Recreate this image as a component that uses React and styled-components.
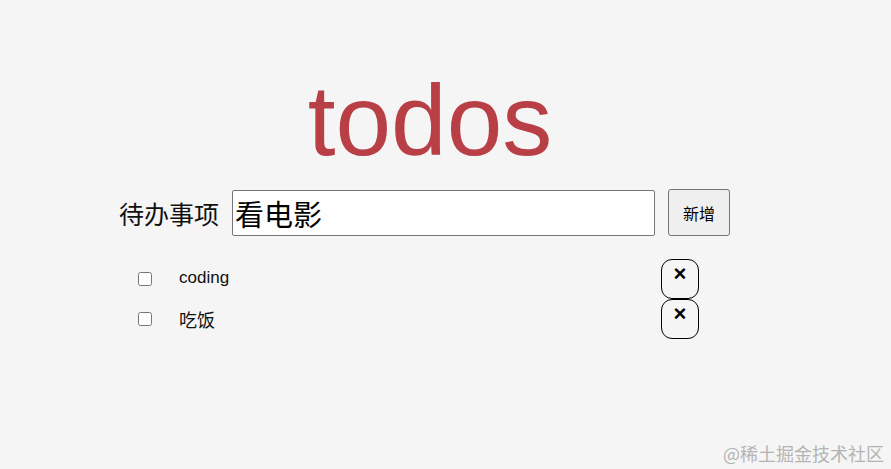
import React, { useState } from "react";
import styled, { createGlobalStyle } from "styled-components";

const Global = createGlobalStyle`
  html, body { margin: 0; padding: 0; background: #f5f5f5; }
  body {
    width: 891px; height: 469px; overflow: hidden; position: relative;
    font-family: "Liberation Sans", Arial, "Noto Sans CJK SC", sans-serif;
    color: #111;
  }
`;

const Page = styled.main`
  width: 620px;
  margin-left: 120px;
  display: flex;
  flex-direction: column;
`;

const Title = styled.h1`
  margin: 63px 0 0;
  font-size: 100px;
  font-weight: 400;
  line-height: 115px;
  height: 115px;
  color: #b83f45;
  text-align: center;
  font-family: "Liberation Sans", Arial, sans-serif;
`;

const Form = styled.form`
  margin-top: 11px;
  margin-left: -1px;
  display: flex;
  align-items: center;
  height: 47px;
`;

const Label = styled.label`
  font-size: 25px;
  font-family: "Noto Sans CJK SC", sans-serif;
  line-height: 30px;
  margin-right: 13px;
  white-space: nowrap;
`;

const TextInput = styled.input`
  box-sizing: border-box;
  width: 423px;
  height: 46px;
  border: 1px solid #767676;
  border-radius: 2px;
  background: #fff;
  font-size: 29px;
  font-family: "Noto Sans CJK SC", sans-serif;
  padding: 0 2px;
  color: #000;
  outline: none;
`;

const AddButton = styled.button`
  box-sizing: border-box;
  width: 62px;
  height: 47px;
  margin-left: 13px;
  border: 1px solid #767676;
  border-radius: 3px;
  background: #efefef;
  font-size: 16px;
  font-family: "Noto Sans CJK SC", sans-serif;
  color: #000;
  padding: 0;
`;

const List = styled.ul`
  list-style: none;
  margin: 23px 0 0;
  padding: 0 0 0 18px;
  display: flex;
  flex-direction: column;
`;

const Row = styled.li`
  display: flex;
  align-items: center;
  width: 562px;
  height: 40px;
`;

const Check = styled.input`
  width: 14px;
  height: 14px;
  margin: 0 27px 0 0;
  flex: none;
`;

const ItemText = styled.span`
  flex: 1;
  font-size: ${p => (p.$cjk ? "18px" : "17px")};
  font-family: ${p => (p.$cjk ? '"Noto Sans CJK SC", sans-serif' : '"Liberation Sans", Arial, sans-serif')};
  line-height: 24px;
  color: #111;
  margin-top: ${p => (p.$cjk ? "0" : "-2px")};
`;

const DeleteButton = styled.button`
  box-sizing: border-box;
  width: 38px;
  height: 40px;
  margin-right: 1px;
  border: 1px solid #000;
  border-radius: 11px;
  background: transparent;
  display: flex;
  justify-content: center;
  align-items: flex-start;
  padding: 3px 0 0;
  font-family: "Liberation Sans", Arial, sans-serif;
  font-size: 22px;
  font-weight: 700;
  line-height: 22px;
  color: #000;
`;

const Watermark = styled.div`
  position: absolute;
  right: 7px;
  bottom: 4px;
  font-family: "Noto Sans CJK SC", sans-serif;
  font-size: 18px;
  line-height: 24px;
  color: #b4b4b4;
  white-space: nowrap;
`;

export default function App() {
  const [value, setValue] = useState("看电影");
  const [todos] = useState([
    { id: 1, text: "coding", cjk: false },
    { id: 2, text: "吃饭", cjk: true },
  ]);
  return (
    <>
      <Global />
      <Page>
        <Title>todos</Title>
        <Form onSubmit={e => e.preventDefault()}>
          <Label htmlFor="todo">待办事项</Label>
          <TextInput id="todo" value={value} onChange={e => setValue(e.target.value)} />
          <AddButton type="submit">新增</AddButton>
        </Form>
        <List>
          {todos.map(t => (
            <Row key={t.id}>
              <Check type="checkbox" />
              <ItemText $cjk={t.cjk}>{t.text}</ItemText>
              <DeleteButton type="button">×</DeleteButton>
            </Row>
          ))}
        </List>
      </Page>
      <Watermark>@稀土掘金技术社区</Watermark>
    </>
  );
}
